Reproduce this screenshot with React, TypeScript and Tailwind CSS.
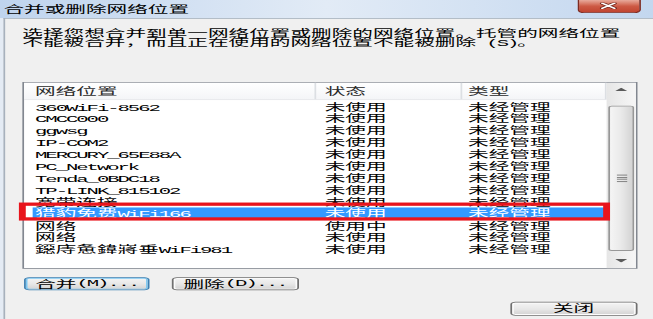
import React from "react";

interface Row {
  name: string;
  status: string;
  kind: string;
}

const rows: Row[] = [
  { name: "360WiFi-8562", status: "未使用", kind: "未经管理" },
  { name: "CMCC000", status: "未使用", kind: "未经管理" },
  { name: "ggwsg", status: "未使用", kind: "未经管理" },
  { name: "IP-COM2", status: "未使用", kind: "未经管理" },
  { name: "MERCURY_65E88A", status: "未使用", kind: "未经管理" },
  { name: "PC_Network", status: "未使用", kind: "未经管理" },
  { name: "Tenda_0BDC18", status: "未使用", kind: "未经管理" },
  { name: "TP-LINK_815102", status: "未使用", kind: "未经管理" },
  { name: "宽带连接", status: "未使用", kind: "未经管理" },
  { name: "猎豹免费WiFi166", status: "未使用", kind: "未经管理" },
  { name: "网络", status: "使用中", kind: "未经管理" },
  { name: "网络", status: "未使用", kind: "未经管理" },
  { name: "鐚庤惫鍏嶈垂WiFi981", status: "未使用", kind: "未经管理" },
];

const SELECTED = 9;

// ascii runs get the half-width mono face, like SimSun does
const Mixed: React.FC<{ text: string }> = ({ text }) => {
  const parts = text.split(/([\x20-\x7e]+)/).filter(Boolean);
  return (
    <>
      {parts.map((p, i) =>
        /^[\x20-\x7e]+$/.test(p) ? (
          <span key={i} className="font-['Liberation_Mono',monospace] tracking-[-1.2px] whitespace-pre">
            {p}
          </span>
        ) : (
          <span key={i}>{p}</span>
        )
      )}
    </>
  );
};

const WinButton: React.FC<{ label: string; focused?: boolean; className?: string }> = ({
  label,
  focused,
  className,
}) => (
  <button
    type="button"
    className={`flex items-center justify-center rounded-[3px] border leading-none whitespace-nowrap bg-gradient-to-b from-[#f4f4f4] via-[#e8e8e8] to-[#d3d3d3] ${
      focused
        ? "border-[#3c7fb1] shadow-[inset_0_0_0_1px_#7cc8f2]"
        : "border-[#707070] shadow-[inset_0_0_0_1px_#fcfcfc]"
    } ${className ?? ""}`}
  >
    <Mixed text={label} />
  </button>
);

const App: React.FC = () => {
  return (
    <div className="w-[653px] h-[319px] overflow-hidden bg-[#f0f0f0]">
      <div className="w-[380px] h-[389px] origin-top-left scale-x-[1.7184] scale-y-[0.82] flex flex-col bg-[#e4ebf4] font-['Noto_Sans_CJK_SC',sans-serif] text-[12px] text-black">
        {/* title bar */}
        <div className="h-[22px] shrink-0 flex items-start justify-between bg-gradient-to-r from-[#bfd4ee] via-[#e2ebf6] to-[#c3d7ef]">
          <div className="h-full pl-[2px] flex items-center leading-none">合并或删除网络位置</div>
          <button
            type="button"
            className="mr-[7.5px] w-[36.5px] h-[15.5px] flex items-center justify-center rounded-b-[4px] border border-t-0 border-[#7e2b21] bg-gradient-to-b from-[#e7aa9c] via-[#cd5a45] to-[#c0432f]"
          >
            <svg width="10" height="8" viewBox="0 0 10 8">
              <path d="M1.5 1 L8.5 7 M8.5 1 L1.5 7" stroke="#6b2219" strokeWidth="3" strokeLinecap="round" />
              <path d="M1.5 1 L8.5 7 M8.5 1 L1.5 7" stroke="#ffffff" strokeWidth="1.6" strokeLinecap="round" />
            </svg>
          </button>
        </div>

        {/* client area */}
        <div className="relative flex-1 ml-[2px] flex flex-col border-l border-t border-[#a7b1bd] bg-[#f0f0f0]">
          <p className="mt-[10.5px] ml-[10px] leading-[11.5px] whitespace-nowrap">
            选择您想合并到单一网络位置或删除的网络位置。托管的网络位置
            <br />
            不能被合并，而且正在使用的网络位置不能被删除<Mixed text=" (S)" />。
          </p>

          {/* list view */}
          <div className="mt-[40px] ml-[10px] w-[358px] h-[228px] flex border border-[#828790] bg-white">
            <div className="flex-1 min-w-0 flex flex-col">
              <div className="h-[21px] shrink-0 flex text-[#2a2a2a] bg-gradient-to-b from-white to-[#f4f5f7] border-b border-[#e3e5e8]">
                <div className="w-[170.3px] pl-[6.4px] flex items-center border-r border-[#dcdfe3]">网络位置</div>
                <div className="w-[84.4px] pl-[4.7px] flex items-center border-r border-[#dcdfe3]">状态</div>
                <div className="flex-1 pl-[3.7px] flex items-center border-r border-[#dcdfe3]">类型</div>
              </div>
              <div className="pt-[1.2px] pl-[4.6px]">
                {rows.map((r, i) => (
                  <div
                    key={i}
                    className={`h-[14.5px] leading-[14.5px] flex whitespace-nowrap ${
                      i === SELECTED ? "bg-[#3399ff] text-white" : ""
                    }`}
                  >
                    <div className="w-[165.7px] pl-[1.8px]">
                      <Mixed text={r.name} />
                    </div>
                    <div className="w-[84.4px] pl-[4.7px]">{r.status}</div>
                    <div className="flex-1 pl-[3.7px]">{r.kind}</div>
                  </div>
                ))}
              </div>
            </div>

            {/* scrollbar */}
            <div className="w-[17px] shrink-0 flex flex-col bg-gradient-to-r from-[#e6e6e6] to-[#f6f6f6]">
              <div className="h-[17px] flex items-center justify-center">
                <svg width="7" height="4" viewBox="0 0 7 4">
                  <polygon points="0,4 3.5,0 7,4" fill="#5a5a5a" />
                </svg>
              </div>
              <div className="flex-1 flex flex-col pt-[11.6px] pb-[3.4px] px-[1px]">
                <div className="flex-1 flex flex-col items-center justify-center gap-[1.5px] rounded-[2px] border border-[#979797] bg-gradient-to-r from-[#f5f5f5] via-[#e9e9e9] to-[#d4d4d4]">
                  <div className="w-[6px] h-[1px] bg-[#6f6f6f]" />
                  <div className="w-[6px] h-[1px] bg-[#6f6f6f]" />
                  <div className="w-[6px] h-[1px] bg-[#6f6f6f]" />
                  <div className="w-[6px] h-[1px] bg-[#6f6f6f]" />
                </div>
              </div>
              <div className="h-[17px] flex items-center justify-center">
                <svg width="7" height="4" viewBox="0 0 7 4">
                  <polygon points="0,0 7,0 3.5,4" fill="#5a5a5a" />
                </svg>
              </div>
            </div>
          </div>

          <div className="mt-[10.6px] ml-[11px] flex gap-[13px]">
            <WinButton label="合并(M)..." focused className="w-[73px] h-[16px]" />
            <WinButton label="删除(D)..." className="w-[73.6px] h-[16px]" />
          </div>

          <div className="mt-[13.5px] flex justify-end pr-[9.2px]">
            <WinButton label="关闭" className="w-[74px] h-[17.5px]" />
          </div>

          {/* red highlight frame drawn over the selected row */}
          <div className="absolute left-[8px] top-[223.6px] w-[343.5px] h-[22px] border-[4px] border-[#e8141c]" />
        </div>
      </div>
    </div>
  );
};

export default App;
